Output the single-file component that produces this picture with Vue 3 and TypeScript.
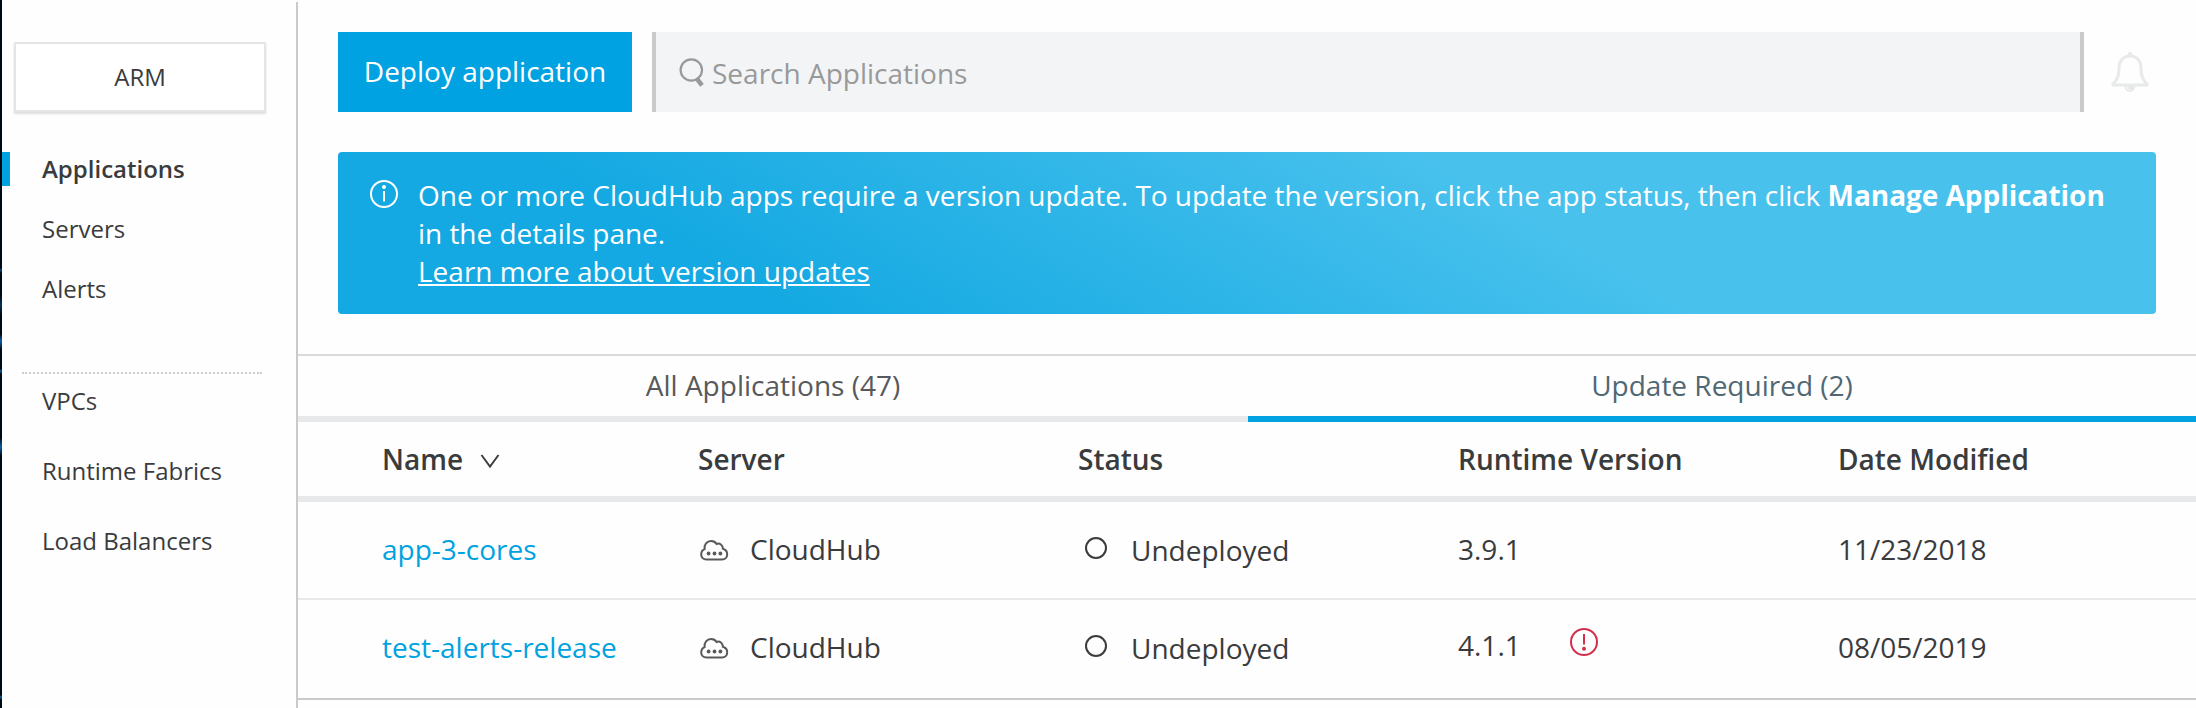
<script setup lang="ts">
interface AppRow {
  name: string
  server: string
  status: string
  version: string
  outdated: boolean
  modified: string
}

const primaryNav: string[] = ['Applications', 'Servers', 'Alerts']
const secondaryNav: string[] = ['VPCs', 'Runtime Fabrics', 'Load Balancers']

const tabs = [
  { label: 'All Applications (47)', active: false },
  { label: 'Update Required (2)', active: true },
]

const columns: string[] = ['Name', 'Server', 'Status', 'Runtime Version', 'Date Modified']

const rows: AppRow[] = [
  { name: 'app-3-cores', server: 'CloudHub', status: 'Undeployed', version: '3.9.1', outdated: false, modified: '11/23/2018' },
  { name: 'test-alerts-release', server: 'CloudHub', status: 'Undeployed', version: '4.1.1', outdated: true, modified: '08/05/2019' },
]
</script>

<template>
  <div class="page">
    <div class="edge"></div>
    <aside class="sidebar">
      <button class="env">ARM</button>
      <nav class="primary">
        <a v-for="(item, i) in primaryNav" :key="item" class="nav-item" :class="{ active: i === 0 }">
          <span>{{ item }}</span>
        </a>
      </nav>
      <nav class="secondary">
        <a v-for="item in secondaryNav" :key="item" class="nav-item tall">{{ item }}</a>
      </nav>
    </aside>
    <div class="divider"></div>
    <main class="main">
      <header class="toolbar">
        <button class="deploy">Deploy application</button>
        <div class="search">
          <svg class="search-icon" width="28" height="32" viewBox="0 0 28 32">
            <circle cx="13.3" cy="13" r="10.7" fill="none" stroke="#999" stroke-width="2.2" />
            <path d="M18.400 21.200 24 28.400" stroke="#999" stroke-width="4.600" fill="none" />
          </svg>
          <span>Search Applications</span>
        </div>
        <svg class="bell" width="40" height="44" viewBox="0 0 40 44">
          <path d="M20 6C13 6 9 11 9 18C9 26 7.500 29.500 3 34.200C2.500 35 2.800 35 3.500 35H36.500C37.200 35 37.500 35 37 34.200C32.500 29.500 31 26 31 18C31 11 27 6 20 6Z" fill="none" stroke="#e8e9ea" stroke-width="3" stroke-linejoin="round" />
          <path d="M18.300 6V4a1.700 1.700 0 0 1 3.400 0V6Z" fill="#e8e9ea" stroke="#e8e9ea" />
          <path d="M14.500 36a5.500 6 0 0 0 11 0Z" fill="#e8e9ea" />
          <path d="M16.700 36.500q.5 2.800 2.600 3.700" fill="none" stroke="#fff" stroke-width=".8" />
        </svg>
      </header>

      <section class="banner">
        <svg class="info" width="30" height="30" viewBox="0 0 30 30">
          <circle cx="15" cy="15" r="13" fill="none" stroke="#fff" stroke-width="2" />
          <circle cx="15" cy="8" r="2" fill="#fff" />
          <path d="M15 12V22.500" stroke="#fff" stroke-width="2" />
        </svg>
        <p>
          One or more CloudHub apps require a version update. To update the version, click the app status, then click
          <b>Manage Application</b> in the details pane.<br />
          <a class="learn">Learn more about version updates</a>
        </p>
      </section>

      <section class="listing">
        <div class="tabs">
          <div v-for="tab in tabs" :key="tab.label" class="tab" :class="{ active: tab.active }">{{ tab.label }}</div>
        </div>
        <div class="grid head">
          <div v-for="(col, i) in columns" :key="col" class="cell">
            {{ col }}
            <svg v-if="i === 0" class="sort" width="20" height="16" viewBox="0 0 20 16">
              <path d="M1.500 2 10 13.600 18.500 2" fill="none" stroke="#3a3b3c" stroke-width="1.900" />
            </svg>
          </div>
        </div>
        <div v-for="row in rows" :key="row.name" class="grid row">
          <div class="cell"><a class="link">{{ row.name }}</a></div>
          <div class="cell">
            <svg class="cloud" width="30" height="22" viewBox="0 0 30 22">
              <path d="M7.500 20.500C4.300 20.500 2.200 18.400 2.200 15.500C2.200 12.800 3.500 10.900 5.600 10.100C4.900 5.600 8 2 12 2C14.600 2 16.500 3.100 17.600 5C20.700 3.700 23.900 6 23.900 9.800C26.500 10.500 28.200 12.700 28.200 15.500C28.200 18.400 26.100 20.500 23 20.500Z" fill="none" stroke="#58595a" stroke-width="2" />
              <circle cx="9.600" cy="14.500" r="1.900" fill="#58595a" />
              <circle cx="15.500" cy="14.500" r="1.900" fill="#58595a" />
              <circle cx="21.400" cy="14.500" r="1.900" fill="#58595a" />
            </svg>
            <span>{{ row.server }}</span>
          </div>
          <div class="cell status">
            <i class="ring"></i>
            <span>{{ row.status }}</span>
          </div>
          <div class="cell" :class="{ outdated: row.outdated }">
            <span>{{ row.version }}</span>
            <svg v-if="row.outdated" class="warn" width="30" height="30" viewBox="0 0 30 30">
              <circle cx="15" cy="15" r="13" fill="none" stroke="#d1304c" stroke-width="2" />
              <path d="M15 7V17.500" stroke="#d1304c" stroke-width="2" />
              <circle cx="15" cy="21.800" r="2" fill="#d1304c" />
            </svg>
          </div>
          <div class="cell">{{ row.modified }}</div>
        </div>
      </section>
    </main>
  </div>
</template>

<style>
body {
  background: #fff;
  overflow: hidden;
}
</style>

<style scoped>
.page {
  display: flex;
  width: 2196px;
  height: 708px;
  overflow: hidden;
  background: #fefefe;
  color: #3a3b3c;
  font-family: 'Open Sans', 'Noto Sans', sans-serif;
  font-size: 28px;
}
svg {
  flex: none;
  display: block;
}
button {
  font: inherit;
  color: inherit;
  padding: 0;
  margin: 0;
}
.edge {
  flex: none;
  width: 2px;
  background: linear-gradient(#000814 0 268px, #0a4a86 270px, #000814 273px 295px, #06305a 305px, #000814 315px 334px, #0b5ea8 341px, #000814 350px 369px, #0b5ea8 371px, #000814 374px 438px, #0b5ea8 447px, #000814 456px 695px, #0b5ea8 697px, #000814 700px);
}
.sidebar {
  flex: none;
  width: 294px;
  font-size: 24px;
}
.env {
  display: block;
  box-sizing: border-box;
  width: 252px;
  height: 70px;
  margin: 42px 0 0 12px;
  background: #fff;
  border: 2px solid #e5e5e5;
  box-shadow: 0 2px 2px #ddd;
  line-height: 66px;
  text-align: center;
}
.primary {
  margin-top: 26px;
  height: 234px;
}
.nav-item {
  display: flex;
  align-items: center;
  height: 60px;
  padding-left: 40px;
}
.nav-item.active {
  font-weight: 600;
  background: linear-gradient(#00a2df, #00a2df) 0 14px / 8px 34px no-repeat;
}
.secondary {
  margin: 0 34px 0 20px;
  border-top: 2px dotted #ccc;
}
.nav-item.tall {
  height: 70px;
  padding-left: 20px;
}
.nav-item.tall:first-child {
  height: 52px;
}
.nav-item.tall:nth-child(2) {
  margin-top: 9px;
}
.divider {
  flex: none;
  width: 2px;
  height: 706px;
  margin-top: 2px;
  background: #c9caca;
}
.main {
  flex: none;
  width: 1900px;
}
.toolbar {
  display: flex;
  height: 80px;
  margin: 32px 0 0 40px;
}
.deploy {
  width: 294px;
  height: 80px;
  padding-bottom: 2px;
  border: 0;
  background: #00a2e1;
  color: #fff;
}
.search {
  box-sizing: border-box;
  display: flex;
  width: 1432px;
  height: 80px;
  margin-left: 20px;
  padding-left: 22px;
  border: solid #c9caca;
  border-width: 0 4px;
  background: #f3f4f6;
  color: #999;
  line-height: 82px;
}
.search-icon {
  margin: 25px 6px 0 0;
}
.bell {
  margin: 18px 0 0 26px;
}
.banner {
  box-sizing: border-box;
  display: flex;
  width: 1818px;
  height: 162px;
  margin: 40px 0 0 40px;
  padding: 24px 30px 0 31px;
  border-radius: 4px;
  background: linear-gradient(30deg, #14a9e2 22%, #48c1ed 65%);
  color: #fff;
}
.info {
  margin-top: 3px;
}
.banner p {
  margin: 0 0 0 19px;
  width: 1710px;
  line-height: 38px;
  letter-spacing: -0.035px;
}
.learn {
  letter-spacing: 0;
  text-decoration: underline;
}
.listing {
  margin-top: 40px;
}
.tabs {
  display: flex;
  border-top: 2px solid #d9dada;
}
.tab {
  box-sizing: border-box;
  width: 950px;
  height: 66px;
  border-bottom: 6px solid #e7e8ea;
  line-height: 58px;
  text-align: center;
  color: #58595a;
}
.tab.active {
  padding-right: 2px;
  border-color: #00a2e1;
  color: #506874;
}
.grid {
  display: grid;
  grid-template-columns: repeat(5, 380px);
}
.cell {
  display: flex;
  align-items: center;
  padding-left: 20px;
}
.cell:first-child {
  padding-left: 84px;
}
.head {
  height: 74px;
  border-bottom: 6px solid #e7e8ea;
  font-weight: 600;
}
.sort {
  margin: 4px 0 0 17px;
}
.row {
  box-sizing: border-box;
  height: 98px;
  padding-bottom: 2px;
  border-bottom: 2px solid #e7e8ea;
}
.row:last-child {
  height: 100px;
  padding-bottom: 4px;
  border-color: #c9caca;
}
.link {
  color: #00a2df;
}
.cloud {
  margin: 2px 21px 0 1px;
}
.status span {
  margin: 2px 0 0 24px;
}
.ring {
  box-sizing: border-box;
  width: 22px;
  height: 22px;
  margin: -2px 0 0 7px;
  border: 2px solid #3a3b3c;
  border-radius: 50%;
}
.outdated {
  padding-bottom: 4px;
}
.warn {
  margin: -6px 0 0 48px;
}
</style>
